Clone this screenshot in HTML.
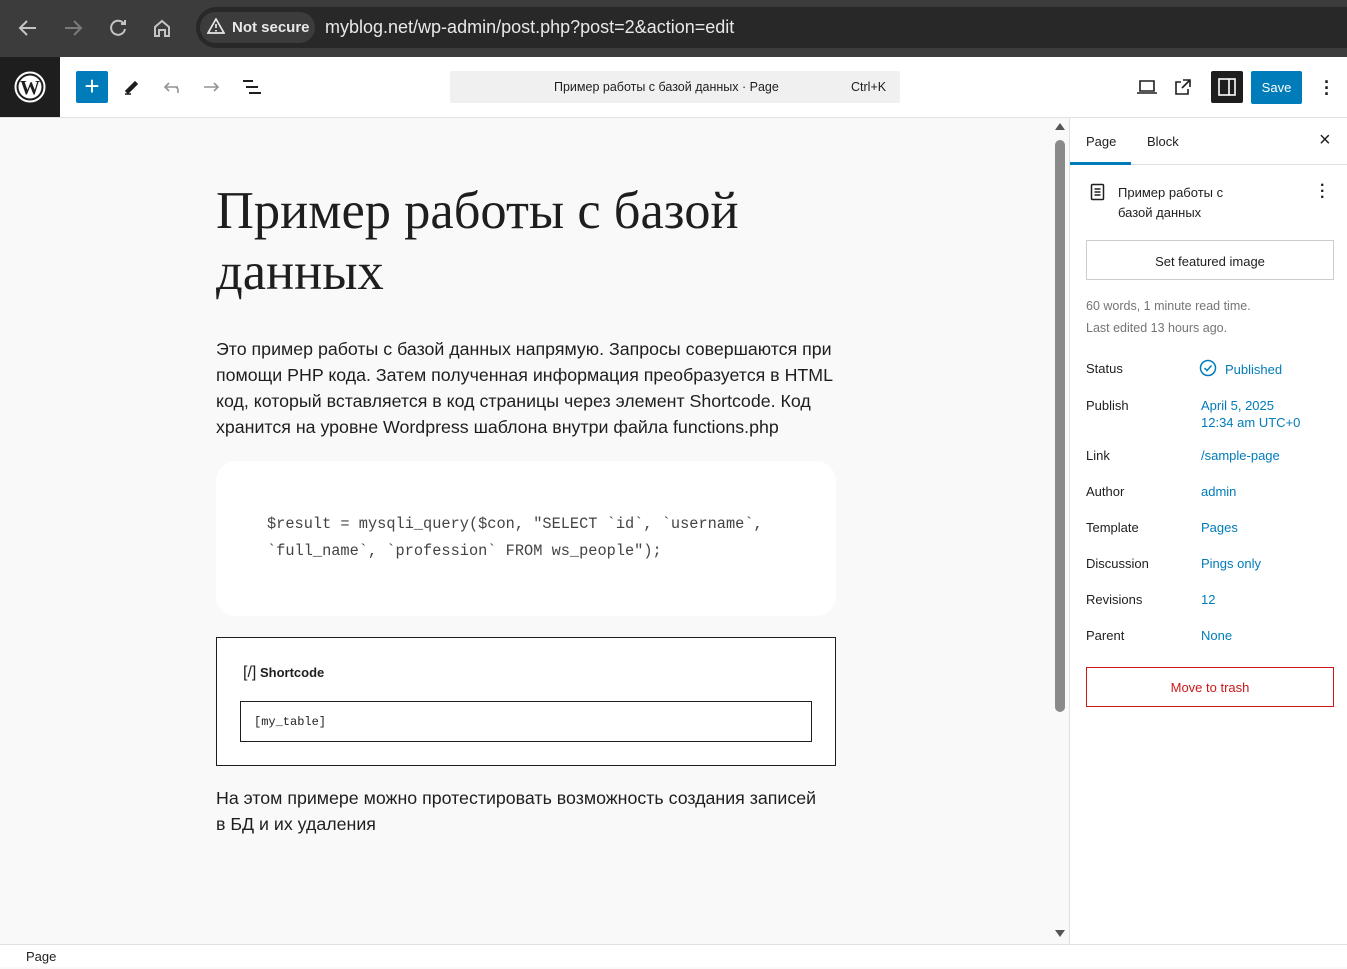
<!DOCTYPE html>
<html><head><meta charset="utf-8"><style>
*{box-sizing:border-box;margin:0;padding:0}
body{width:1347px;height:967px;overflow:hidden;font-family:"Liberation Sans",sans-serif;background:#f9f9f9;position:relative;color:#1e1e1e}
.abs{position:absolute}
#chrome{left:0;top:0;width:1347px;height:57px;background:#3c3c3c}
#url{left:196px;top:7px;width:1151px;height:41px;background:#282828;border-radius:21px 0 0 21px}
#ns{left:200px;top:12px;width:115px;height:31px;background:#3c3c3c;border-radius:16px;color:#e8e8e8;font-size:15px;font-weight:bold;line-height:31px;padding-left:32px}
#urltext{left:325px;top:17px;color:#e8e8e8;font-size:18px}
#tb{left:0;top:57px;width:1347px;height:61px;background:#fff;border-bottom:1px solid #e0e0e0}
#logo{left:0;top:57px;width:60px;height:60px;background:#1e1e1e}
#plus{left:76px;top:71px;width:32px;height:32px;background:#007cba;border-radius:2px;color:#fff;font-size:26px;text-align:center;line-height:30px}
#cmd{left:450px;top:71px;width:450px;height:32px;background:#f0f0f0;border-radius:2px;font-size:12.5px;line-height:33px}
#side{left:1069px;top:118px;width:278px;height:826px;background:#fff;border-left:1px solid #e0e0e0}
#status{left:0;top:944px;width:1347px;height:23px;background:#fff;border-top:1px solid #e0e0e0;font-size:13px;padding-left:26px;line-height:24px}
.lbl{font-size:13px;color:#1e1e1e;left:1086px}
.val{font-size:13px;color:#007cba;left:1201px}
</style></head><body>
<div id="chrome" class="abs"></div>
<svg class="abs" style="left:16px;top:16px" width="170" height="24" viewBox="0 0 170 24" fill="none" stroke-width="2">
<path d="M20 12H5M11 5L4 12L11 19" stroke="#c4c4c4"/>
<path d="M49 12H64M58 5L65 12L58 19" stroke="#7a7a7a"/>
<path d="M108 8A7 7 0 1 0 109 13M109 4V8H105" stroke="#c4c4c4"/>
<path d="M139 20V11L146 5L153 11V20H149V14H143V20Z" stroke="#c4c4c4"/>
</svg>
<div id="url" class="abs"></div>
<div id="ns" class="abs">Not secure</div>
<svg class="abs" style="left:207px;top:18px" width="18" height="16" viewBox="0 0 18 16"><path d="M9 1L17 15H1Z" fill="none" stroke="#e8e8e8" stroke-width="1.7"/><path d="M9 6V10M9 12V13.5" stroke="#e8e8e8" stroke-width="1.7"/></svg>
<div id="urltext" class="abs">myblog.net/wp-admin/post.php?post=2&amp;action=edit</div>
<div id="tb" class="abs"></div>
<div id="logo" class="abs"><svg style="margin:14px" width="32" height="32" viewBox="0 0 32 32"><circle cx="16" cy="16" r="14.5" fill="none" stroke="#fff" stroke-width="2"/><circle cx="16" cy="16" r="11.5" fill="#fff"/><text x="16" y="23" font-family="Liberation Serif" font-weight="bold" font-size="20" text-anchor="middle" fill="#1e1e1e">W</text></svg></div>
<div id="plus" class="abs">+</div>
<svg class="abs" style="left:120px;top:75px" width="150" height="24" viewBox="0 0 150 24" fill="none" stroke-width="1.6">
<path d="M5 19H11M6 16L15 7L17 9L8 18Z" stroke="#1e1e1e" fill="#1e1e1e"/>
<path d="M58 12H46M49 8L45 12L49 16M46 12H56A4 4 0 0 1 58 16V18" stroke="#949494"/>
<path d="M84 12H98M94 8L98 12L94 16" stroke="#949494"/>
<path d="M123 6H133M126 12H138M129 18H141" stroke="#1e1e1e" stroke-width="2"/>
</svg>
<div id="cmd" class="abs"><span style="position:absolute;left:104px">Пример работы с базой данных · Page</span><span style="position:absolute;left:401px">Ctrl+K</span></div>
<svg class="abs" style="left:1136px;top:76px" width="70" height="22" viewBox="0 0 70 22" fill="none" stroke="#1e1e1e" stroke-width="1.6">
<path d="M4 5H18V15H4ZM1 17H21"/>
<path d="M45 6H40V18H52V13M47 4H54V11M54 4L46 12"/>
</svg>
<div class="abs" style="left:1211px;top:71px;width:32px;height:32px;background:#1e1e1e;border-radius:2px"><svg width="32" height="32"><rect x="8" y="8" width="16" height="16" fill="none" stroke="#fff" stroke-width="1.6"/><path d="M18 8V24" stroke="#fff" stroke-width="1.6"/></svg></div>
<div class="abs" style="left:1251px;top:71px;width:51px;height:33px;background:#007cba;border-radius:2px;color:#fff;font-size:13px;text-align:center;line-height:33px">Save</div>
<div class="abs" style="left:1324px;top:79px;font-size:18px;line-height:6px;font-weight:bold">·<br>·<br>·</div>

<div class="abs" style="left:216px;top:181px;font-family:'Liberation Serif',serif;font-size:52.5px;line-height:61px;width:640px">Пример работы с базой данных</div>
<div class="abs" style="left:216px;top:336px;font-size:17.8px;line-height:26px;width:630px">Это пример работы с базой данных напрямую. Запросы совершаются при помощи PHP кода. Затем полученная информация преобразуется в HTML код, который вставляется в код страницы через элемент Shortcode. Код хранится на уровне Wordpress шаблона внутри файла functions.php</div>
<div class="abs" style="left:216px;top:461px;width:620px;height:155px;background:#fff;border-radius:20px;padding:50px 0 0 51px;font-family:'Liberation Mono',monospace;font-size:15.3px;line-height:27px;color:#444">$result = mysqli_query($con, "SELECT `id`, `username`,<br>`full_name`, `profession` FROM ws_people");</div>
<div class="abs" style="left:216px;top:637px;width:620px;height:129px;border:1px solid #1e1e1e;background:#fff"></div>
<div class="abs" style="left:243px;top:664px;font-size:13px;font-weight:bold"><span style="font-weight:normal;font-size:16px">[/]</span> Shortcode</div>
<div class="abs" style="left:240px;top:701px;width:572px;height:41px;border:1px solid #1e1e1e;font-family:'Liberation Mono',monospace;font-size:12px;line-height:40px;padding-left:13px">[my_table]</div>
<div class="abs" style="left:216px;top:785px;font-size:17.8px;line-height:26px;width:640px">На этом примере можно протестировать возможность создания записей<br>в БД и их удаления</div>

<div class="abs" style="left:1055px;top:123px;width:0;height:0;border:5px solid transparent;border-bottom:7px solid #555;border-top:0"></div>
<div class="abs" style="left:1055px;top:140px;width:10px;height:572px;background:#8a8a8a;border-radius:5px"></div>
<div class="abs" style="left:1055px;top:930px;width:0;height:0;border:5px solid transparent;border-top:7px solid #555;border-bottom:0"></div>

<div id="side" class="abs"></div>
<div class="abs" style="left:1070px;top:164px;width:277px;height:1px;background:#e0e0e0"></div>
<div class="abs" style="left:1070px;top:162px;width:61px;height:3px;background:#007cba"></div>
<div class="abs" style="left:1086px;top:134px;font-size:13px">Page</div>
<div class="abs" style="left:1147px;top:134px;font-size:13px">Block</div>
<div class="abs" style="left:1319px;top:129px;font-size:20px">×</div>
<svg class="abs" style="left:1089px;top:183px" width="18" height="18" viewBox="0 0 18 18" fill="none" stroke="#1e1e1e" stroke-width="1.5"><rect x="2.5" y="1.5" width="12" height="15" rx="1"/><path d="M5.5 6H11.5M5.5 9H11.5M5.5 12H11.5"/></svg>
<div class="abs" style="left:1118px;top:183px;font-size:13px;line-height:20px">Пример работы с<br>базой данных</div>
<div class="abs" style="left:1320px;top:183px;font-size:16px;line-height:6px;font-weight:bold">·<br>·<br>·</div>
<div class="abs" style="left:1086px;top:240px;width:248px;height:40px;border:1px solid #ccc;font-size:13px;text-align:center;line-height:41px">Set featured image</div>
<div class="abs" style="left:1086px;top:295px;font-size:12.5px;color:#757575;line-height:22px">60 words, 1 minute read time.<br>Last edited 13 hours ago.</div>
<div class="abs lbl" style="top:361px">Status</div>
<svg class="abs" style="left:1199px;top:359px" width="18" height="18" viewBox="0 0 18 18" fill="none" stroke="#007cba" stroke-width="1.5"><circle cx="9" cy="9" r="7.5"/><path d="M5.5 9L8 11.5L12.5 6.5"/></svg>
<div class="abs val" style="left:1225px;top:362px">Published</div>
<div class="abs lbl" style="top:398px">Publish</div>
<div class="abs val" style="top:397px;line-height:17px">April 5, 2025<br>12:34 am UTC+0</div>
<div class="abs lbl" style="top:448px">Link</div><div class="abs val" style="top:448px">/sample-page</div>
<div class="abs lbl" style="top:484px">Author</div><div class="abs val" style="top:484px">admin</div>
<div class="abs lbl" style="top:520px">Template</div><div class="abs val" style="top:520px">Pages</div>
<div class="abs lbl" style="top:556px">Discussion</div><div class="abs val" style="top:556px">Pings only</div>
<div class="abs lbl" style="top:592px">Revisions</div><div class="abs val" style="top:592px">12</div>
<div class="abs lbl" style="top:628px">Parent</div><div class="abs val" style="top:628px">None</div>
<div class="abs" style="left:1086px;top:667px;width:248px;height:40px;border:1px solid #cc1818;color:#cc1818;font-size:13px;text-align:center;line-height:39px">Move to trash</div>
<div id="status" class="abs">Page</div>
</body></html>
